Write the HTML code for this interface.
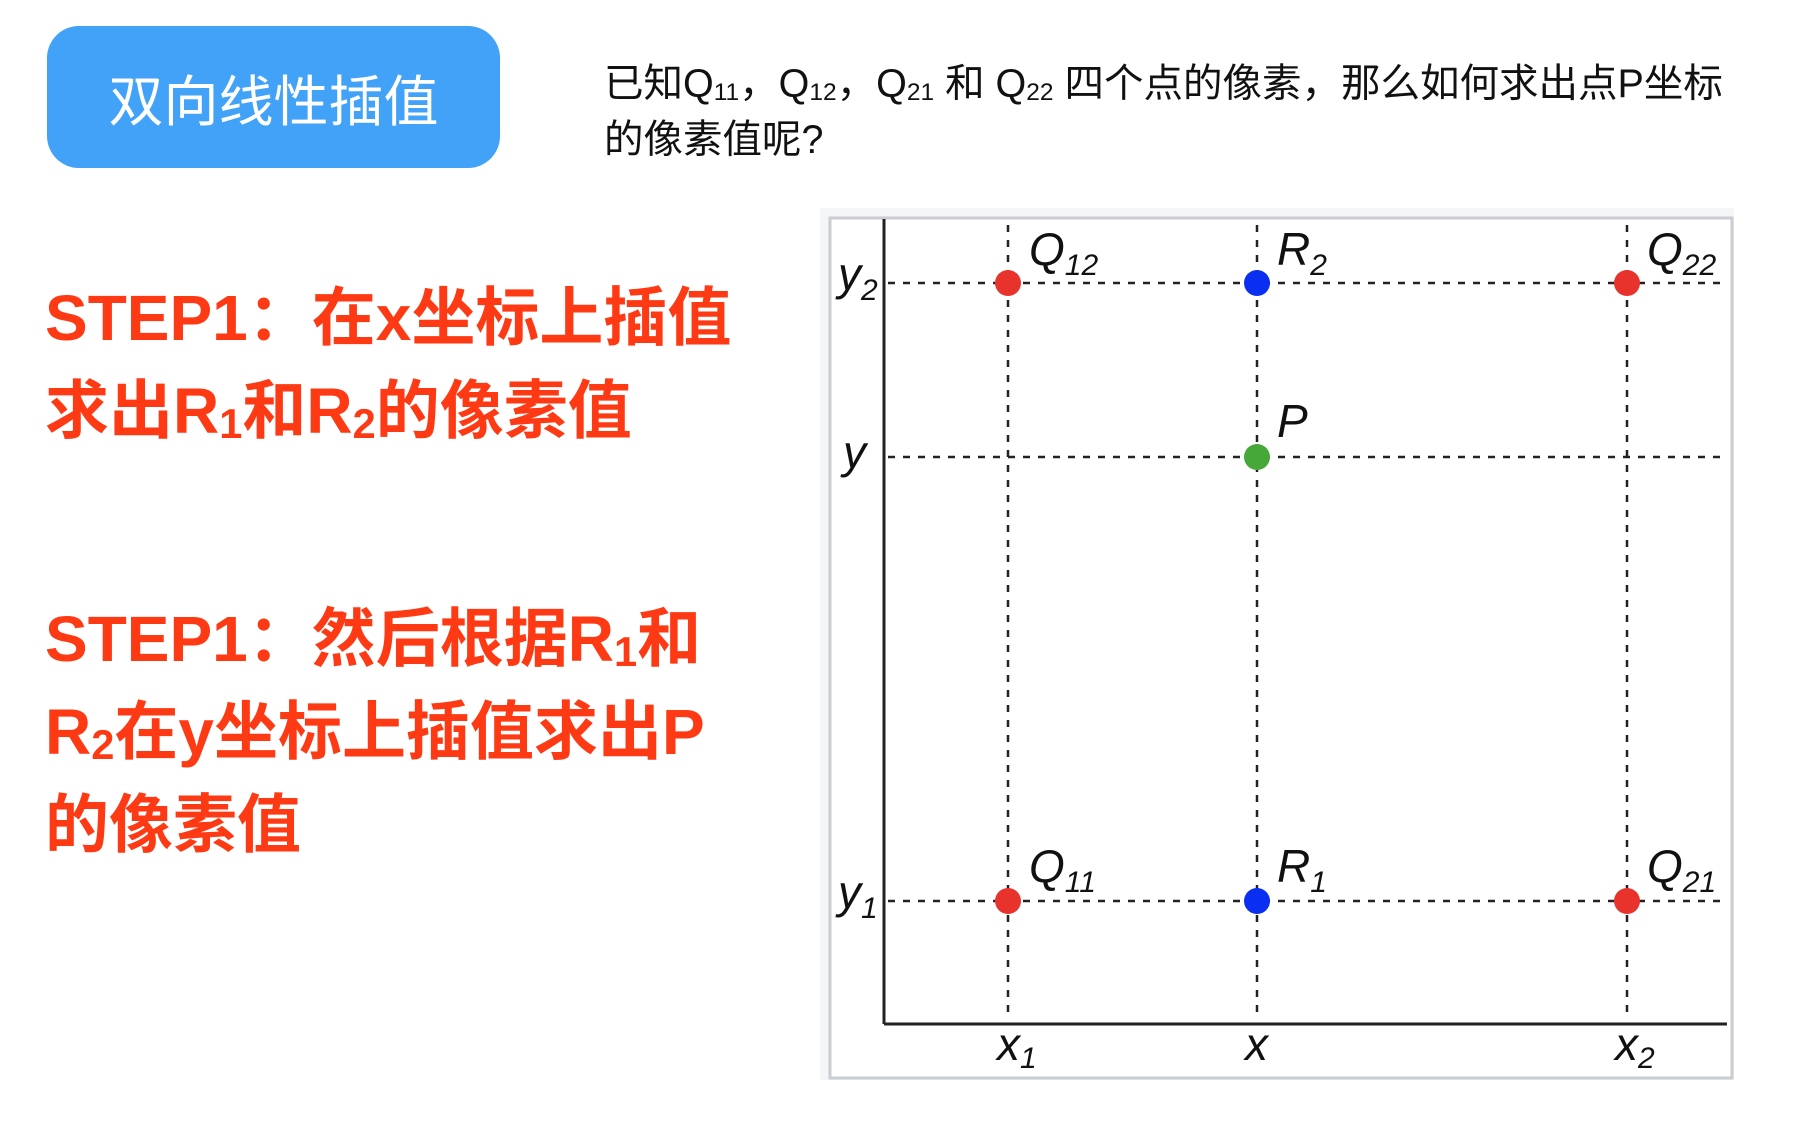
<!DOCTYPE html>
<html><head><meta charset="utf-8"><style>
html,body{margin:0;padding:0;background:#fff;width:1806px;height:1122px;overflow:hidden;position:relative}
.btn{position:absolute;left:47px;top:26px;width:453px;height:142px;background:#42a2f7;border-radius:32px;color:#fff;font:55px "Liberation Sans","Noto Sans CJK SC",sans-serif;display:flex;align-items:center;justify-content:center}
.desc{position:absolute;left:604px;top:56px;width:1200px;font:39.5px/56px "Liberation Sans","Noto Sans CJK SC",sans-serif;color:#111;white-space:nowrap}
.desc sub{font-size:0.62em}
.red{position:absolute;left:45px;font:bold 64px/93px "Liberation Sans","Noto Sans CJK SC",sans-serif;color:#fd3a14;white-space:nowrap}
sub{font-size:0.65em;vertical-align:-0.12em;line-height:0}
</style></head><body>
<div class="btn">双向线性插值</div>
<div class="desc">已知Q<sub>11</sub>，Q<sub>12</sub>，Q<sub>21</sub> 和 Q<sub>22</sub> 四个点的像素，那么如何求出点P坐标<br>的像素值呢?</div>
<div class="red" style="top:272px">STEP1：在x坐标上插值<br>求出R<sub>1</sub>和R<sub>2</sub>的像素值</div>
<div class="red" style="top:593px">STEP1：然后根据R<sub>1</sub>和<br>R<sub>2</sub>在y坐标上插值求出P<br>的像素值</div>
<svg style="position:absolute;left:0;top:0" width="1806" height="1122">
<rect x="820" y="208" width="914" height="872" fill="#f4f5f7"/>
<rect x="830" y="218" width="902" height="860" fill="#fff" stroke="#c9ccd1" stroke-width="3"/>
<line x1="884" y1="219" x2="884" y2="1024" stroke="#222" stroke-width="3"/>
<line x1="884" y1="1024" x2="1727" y2="1024" stroke="#222" stroke-width="3"/>
<g stroke="#222" stroke-width="2.5" stroke-dasharray="7,8">
<line x1="1008" y1="225" x2="1008" y2="1020"/>
<line x1="1257" y1="225" x2="1257" y2="1020"/>
<line x1="1627" y1="225" x2="1627" y2="1020"/>
<line x1="888" y1="283" x2="1722" y2="283"/>
<line x1="888" y1="457" x2="1722" y2="457"/>
<line x1="888" y1="901" x2="1722" y2="901"/>
</g>
<circle cx="1008" cy="283" r="13" fill="#e8332c"/>
<circle cx="1257" cy="283" r="13" fill="#0a2ff0"/>
<circle cx="1627" cy="283" r="13" fill="#e8332c"/>
<circle cx="1257" cy="457" r="13" fill="#47a83a"/>
<circle cx="1008" cy="901" r="13" fill="#e8332c"/>
<circle cx="1257" cy="901" r="13" fill="#0a2ff0"/>
<circle cx="1627" cy="901" r="13" fill="#e8332c"/>
<g font-family="Liberation Sans, sans-serif" font-style="italic" font-size="46" fill="#111">
<text x="1029" y="265">Q<tspan font-size="30" dy="10">12</tspan></text>
<text x="1277" y="265">R<tspan font-size="30" dy="10">2</tspan></text>
<text x="1647" y="265">Q<tspan font-size="30" dy="10">22</tspan></text>
<text x="1277" y="437">P</text>
<text x="1029" y="882">Q<tspan font-size="30" dy="10">11</tspan></text>
<text x="1277" y="882">R<tspan font-size="30" dy="10">1</tspan></text>
<text x="1647" y="882">Q<tspan font-size="30" dy="10">21</tspan></text>
<text x="838" y="290">y<tspan font-size="30" dy="10">2</tspan></text>
<text x="843" y="468">y</text>
<text x="838" y="908">y<tspan font-size="30" dy="10">1</tspan></text>
<text x="997" y="1060">x<tspan font-size="30" dy="8">1</tspan></text>
<text x="1245" y="1060">x</text>
<text x="1615" y="1060">x<tspan font-size="30" dy="8">2</tspan></text>
</g>
</svg>
</body></html>
